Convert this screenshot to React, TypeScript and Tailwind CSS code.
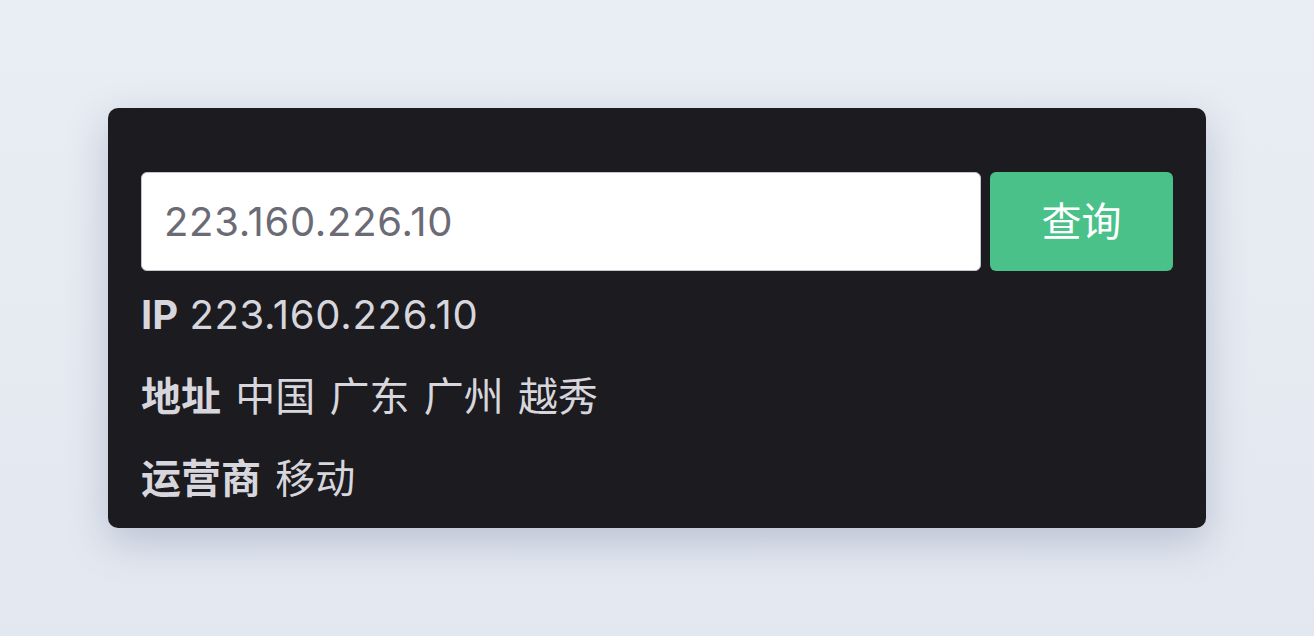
export default function App() {
  return (
    <div
      className="w-full h-[636px] flex items-center justify-center bg-gradient-to-b from-[#e9edf4] to-[#e3e8f0]"
      style={{ fontFamily: 'Inter, "Noto Sans CJK SC", sans-serif' }}
    >
      <div className="w-[1098px] h-[420px] rounded-[10px] bg-[#1c1b20] px-[33px] pt-[64px] shadow-[0_14px_40px_rgba(60,80,120,0.25)]">
        <div className="flex gap-[9px]">
          <input
            className="flex-1 h-[99px] rounded-[6px] border border-[#c4c4cc] bg-white px-[22px] text-[40px] tracking-[0.7px] text-[#6b6b76] outline-none"
            defaultValue="223.160.226.10"
            style={{ fontFamily: 'Inter, "Noto Sans CJK SC", sans-serif' }}
          />
          <button className="w-[183px] h-[99px] rounded-[6px] bg-[#4bc18a] text-[40px] text-white">
            查询
          </button>
        </div>
        <div className="mt-[14px] flex flex-col gap-[24px] text-[40px] leading-[60px] text-[#d6d6dc] [word-spacing:3px]">
          <div className="[word-spacing:0px]">
            <span className="font-bold">IP</span>{' '}
            <span className="tracking-[0.7px]">223.160.226.10</span>
          </div>
          <div className="-mt-[2px]">
            <span className="font-bold">地址</span> 中国 广东 广州 越秀
          </div>
          <div className="-mt-[2px]">
            <span className="font-bold">运营商</span> 移动
          </div>
        </div>
      </div>
    </div>
  );
}
